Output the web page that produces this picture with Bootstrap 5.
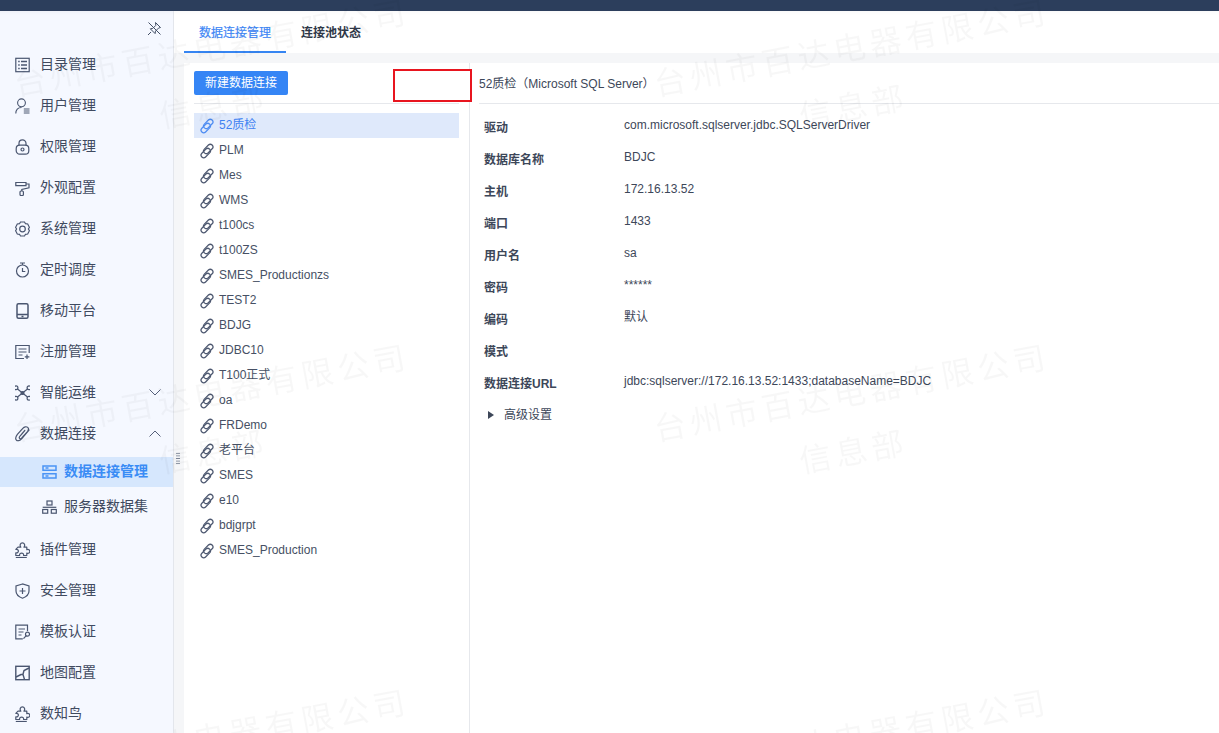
<!DOCTYPE html>
<html lang="zh-CN"><head><meta charset="utf-8"><title>数据连接管理</title>
<link href="https://cdn.jsdelivr.net/npm/bootstrap@5.3.0/dist/css/bootstrap.min.css" rel="stylesheet">
<style>
html,body{height:733px;overflow:hidden;margin:0}
body{font-family:"Liberation Sans","Noto Sans CJK SC",sans-serif;font-size:12px;color:#3d4759;background:#fff}
.top-strip{height:11px;background:#2c3e5c}
.app-body{height:722px}
.side-nav{width:174px;flex:none;background:#f5f8ff;border-right:1px solid #e3e6ec;padding-top:33px;position:relative;box-shadow:inset 0 5px 5px -5px rgba(0,0,0,.06)}
.pin-btn{position:absolute;top:10px;right:11px;color:#445066}
.nv-item{height:41px;padding-left:15px;font-size:14px;color:#3f4a60;gap:10px}
.nv-item svg.ic{width:15px;height:16px;flex:none;color:#4a5670;overflow:visible}
.nv-item .chev{margin-left:auto;margin-right:12px;color:#55607a}
.nv-sub{padding:2.5px 0 7.5px;display:flex;flex-direction:column;gap:5px}
.nv-subitem{height:30px;padding-left:42px;font-size:14px;color:#3f4a60;gap:7px}
.nv-subitem svg{width:15px;height:14px;flex:none;color:#4a5670}
.nv-subitem.on{background:#d6e7fd;color:#3a8cf5;font-weight:700}
.nv-subitem.on svg{color:#4a94f5}
.grip{position:absolute;right:-7px;top:441px;width:4px;height:13px;background-image:radial-gradient(#7c8698 .7px,transparent .8px);background-size:2px 2.6px}
.main-col{background:#f5f6f8;min-width:0}
.tab-bar{height:42px;background:#fff;box-shadow:inset 0 5px 5px -5px rgba(0,0,0,.05);padding-left:10px}
.tab-it{height:42px;padding:0 15px;width:102px;font-size:12px;font-weight:700;color:#2f3848;line-height:45px;white-space:nowrap}
.tab-it.on{color:#3d86f5;border-bottom:2px solid #3685f2;font-weight:400;-webkit-text-stroke:.2px #3d86f5}
.tab-it+.tab-it{width:auto}
.work{margin:10px 0 0 10px;background:#fff;height:670px}
.conn-pane{width:286px;flex:none;border-right:1px solid #e6e8ec;position:relative}
.conn-tool{margin:0 10px;padding-top:8px;border-bottom:1px solid #e6e8ec;box-sizing:content-box;height:32px}
.btn-new{background:#3585f5;color:#fff;border:0;border-radius:2px;width:94px;height:24px;font-size:12px;padding:0;display:block}
.conn-list{margin:9px 10px 0}
.conn-row{height:25px;padding:0 0 2px 5px;gap:4px;color:#465064;font-size:12px}
.conn-row svg{width:16px;height:16px;flex:none;color:#4d5870;margin-top:2px}
.conn-row.on{background:#dfe9fb;color:#3f82f2}
.conn-row.on svg{color:#4d8cf2}
.red-box{position:absolute;left:209px;top:6px;width:79px;height:33px;border:2px solid #e8151f;background:#fff}
.detail-pane{min-width:0;padding-left:9px}
.detail-head{height:41px;line-height:42px;border-bottom:1px solid #e6e8ec;font-size:12px;color:#3d4759;margin-bottom:8px}
.field-row{height:32px;padding-left:5px;margin:0}
.field-k{width:140px;flex:none;font-weight:700;color:#3d4759;line-height:16px;padding-top:8px}
.field-v{line-height:16px;padding-top:5px;color:#3d4759}
.adv-row{padding:6px 0 0 9px;gap:10px;color:#3d4759}
.adv-tri{width:0;height:0;border-left:6px solid #3d4759;border-top:4px solid transparent;border-bottom:4px solid transparent}
.wm-layer{position:fixed;left:-103px;top:-96px;display:grid;grid-template-columns:640px 640px;grid-auto-rows:345px;pointer-events:none;z-index:10}
.wm-cell{display:flex;flex-direction:column;align-items:center;justify-content:center;transform:rotate(-10.5deg);color:rgba(0,0,0,.03);font-size:32px;line-height:58px;letter-spacing:4.5px;white-space:nowrap}
.wm-sub{margin-right:18px}
</style></head><body>
<svg width="0" height="0" class="d-none"><defs>
<symbol id="i-cat" viewBox="0 0 15 16"><g fill="none" stroke="currentColor" stroke-width="1.200"><rect x=".8" y="1.300" width="13.400" height="13.400"/><path d="M3.200 4.500h1.500M3.200 8h1.500M3.200 11.500h1.500M6 4.500h6M6 8h6M6 11.500h6" stroke-width="1.500"/></g></symbol>
<symbol id="i-user" viewBox="0 0 15 16"><g fill="none" stroke="currentColor" stroke-width="1.100"><circle cx="6.500" cy="4.800" r="3.900"/><path d="M.8 15.500c0-3.700 2-6 5.700-6"/><path d="M8.800 11h5.700M8.800 13h5.700M8.800 15h5.700"/></g></symbol>
<symbol id="i-lock" viewBox="0 0 15 16"><g fill="none" stroke="currentColor" stroke-width="1.200"><path d="M4 6.500V4.300a3.500 3.500 0 0 1 7 0v2.200"/><rect x="1.200" y="6.200" width="12.600" height="9" rx="3.500"/><circle cx="7.500" cy="10.500" r="1.500"/></g></symbol>
<symbol id="i-roll" viewBox="0 0 15 16"><g fill="none" stroke="currentColor" stroke-width="1.200"><path d="M11 2.500H.8v3.200H11zM11 4h3v3.800L6.800 9.500V11"/><rect x="5" y="11" width="3.400" height="4.500" rx="1"/></g></symbol>
<symbol id="i-gear" viewBox="0 0 15 16"><g fill="none" stroke="currentColor" stroke-width="1.200"><path d="M5.500 1h4l1 1.700 2.200.3 1.700 3.300-1 1.700 1 1.700-1.700 3.300-2.200.3-1 1.700h-4l-1-1.700-2.200-.3L.6 9.700l1-1.700-1-1.700L2.300 3l2.200-.3z"/><circle cx="7.500" cy="8" r="2.800"/></g></symbol>
<symbol id="i-time" viewBox="0 0 15 16"><g fill="none" stroke="currentColor" stroke-width="1.200"><circle cx="7.500" cy="9" r="6"/><path d="M5 1h5M7.500 1v2M7.500 6v3.500h2.800"/></g></symbol>
<symbol id="i-phone" viewBox="0 0 15 16"><g fill="none" stroke="currentColor" stroke-width="1.500"><rect x="2" y=".8" width="11" height="14.400" rx="1.500"/><path d="M2 11.500h11M6.500 13.400h2"/></g></symbol>
<symbol id="i-reg" viewBox="0 0 15 16"><g fill="none" stroke="currentColor" stroke-width="1.200"><path d="M9 14.500H.8V1.500h13.400V9"/><path d="M3.500 5h8M3.500 8h8M3.500 11h4M12 10.500v4.500M9.800 12.800h4.600"/></g></symbol>
<symbol id="i-net" viewBox="0 0 15 16"><g fill="none" stroke="currentColor" stroke-width="1.200"><circle cx="1" cy="2.800" r="1.900"/><circle cx="14" cy="2.800" r="1.900"/><circle cx="1" cy="13.200" r="1.900"/><circle cx="14" cy="13.200" r="1.900"/><path d="M2.500 4l10 8M12.500 4l-10 8"/><circle cx="7.500" cy="8" r="1.500" fill="currentColor"/></g></symbol>
<symbol id="i-clip" viewBox="0 0 15 16"><path fill="none" stroke="currentColor" stroke-width="1.200" stroke-linecap="round" d="M14 4 6.800 12.600c-1.900 2.300-4.400 2.700-5.400 1.500-1.100-1.200-.7-3.500 1-5.700L7.800 2.300c1.500-1.700 3.700-2 4.900-.9 1.100 1 .9 2.700-.3 4.200L6.800 12c-.8.800-1.700.9-2.200.4s-.3-1.500.4-2.300l4.800-5.600"/></symbol>
<symbol id="i-srv" viewBox="0 0 15 14"><g fill="none" stroke="currentColor" stroke-width="1.500"><path d="M1 1h13v4.200H1zM1 8.800h13V13H1z"/><path d="M3.500 3.100h3M3.500 10.900h3"/></g></symbol>
<symbol id="i-tree" viewBox="0 0 15 14"><g fill="none" stroke="currentColor" stroke-width="1.200"><rect x="5" y="1" width="5" height="4"/><rect x=".7" y="9.500" width="5" height="3.700"/><rect x="9.300" y="9.500" width="5" height="3.700"/><path d="M.7 7.300h13.600"/></g></symbol>
<symbol id="i-puz" viewBox="0 0 15 16"><g fill="none" stroke="currentColor" stroke-width="1.200"><path d="M3 5.200h2.800C4.400 3.200 5.400.8 7.400.8s3 2.400 1.600 4.400h2.800v2.500c1.700-.8 3 .3 3 1.700s-1.300 2.500-3 1.700v2.400H8.600c.2-1.700-.8-2.400-2-2.400s-2.200.7-2 2.400H.8V10.800c1.700.4 2.600-.6 2.600-1.700S2.500 7 .8 7.400z" stroke-linejoin="round"/><path d="M.8 15.500h11"/></g></symbol>
<symbol id="i-shield" viewBox="0 0 15 16"><g fill="none" stroke="currentColor" stroke-width="1.200"><path d="M7.500 1 1 3v5c0 3.500 3.200 6 6.500 7.200C10.800 14 14 11.500 14 8V3z"/><path d="M7.500 5v6M4.500 8h6"/></g></symbol>
<symbol id="i-doc" viewBox="0 0 15 16"><g fill="none" stroke="currentColor" stroke-width="1.200"><path d="M12.500 7V1.200H.8v13.600h7"/><path d="M3.500 5h6.500M3.500 8h5M3.500 11h3"/><circle cx="12.500" cy="10.200" r="2"/><path d="M11 11.800l-2.500 2.800"/></g></symbol>
<symbol id="i-map" viewBox="0 0 15 16"><g fill="none" stroke="currentColor" stroke-width="1.400"><rect x=".8" y="1.300" width="13.400" height="13.400"/><path d="M1 12l5-2.500 2-.2 1-3.800 5-2.500M8 9.500l1.500 5"/></g></symbol>
<symbol id="i-link" viewBox="0 0 14 14"><g fill="none" stroke="currentColor" stroke-width="1.100"><rect x="5.800" y=".4" width="4.600" height="9.600" rx="2.300" transform="rotate(45 8.100 5.200)"/><rect x="3.600" y="4" width="4.600" height="9.600" rx="2.300" transform="rotate(45 5.900 8.800)"/></g></symbol>
</defs></svg>
<div class="top-strip"></div>
<div class="app-body d-flex">
<nav class="side-nav">
<svg class="pin-btn" width="15" height="15" viewBox="0 0 15 15"><g fill="none" stroke="currentColor"><path d="M8.500 1.500l5 5-2 .6-3 3-.4 2.500-4.800-4.800 2.500-.4 3-3z"/><path d="M4 11 1 14M1.500 1.500l12 12"/></g></svg>
<div class="nv-item d-flex align-items-center"><svg class="ic"><use href="#i-cat"/></svg>目录管理</div>
<div class="nv-item d-flex align-items-center"><svg class="ic"><use href="#i-user"/></svg>用户管理</div>
<div class="nv-item d-flex align-items-center"><svg class="ic"><use href="#i-lock"/></svg>权限管理</div>
<div class="nv-item d-flex align-items-center"><svg class="ic"><use href="#i-roll"/></svg>外观配置</div>
<div class="nv-item d-flex align-items-center"><svg class="ic"><use href="#i-gear"/></svg>系统管理</div>
<div class="nv-item d-flex align-items-center"><svg class="ic"><use href="#i-time"/></svg>定时调度</div>
<div class="nv-item d-flex align-items-center"><svg class="ic"><use href="#i-phone"/></svg>移动平台</div>
<div class="nv-item d-flex align-items-center"><svg class="ic"><use href="#i-reg"/></svg>注册管理</div>
<div class="nv-item d-flex align-items-center"><svg class="ic"><use href="#i-net"/></svg>智能运维<svg class="chev" width="12" height="7" viewBox="0 0 12 7"><path d="M.5.5 6 6l5.500-5.500" fill="none" stroke="currentColor"/></svg></div>
<div class="nv-item d-flex align-items-center"><svg class="ic"><use href="#i-clip"/></svg>数据连接<svg class="chev" width="12" height="7" viewBox="0 0 12 7"><path d="M.5 6.500 6 1l5.500 5.500" fill="none" stroke="currentColor"/></svg></div>
<div class="nv-sub">
<div class="nv-subitem on d-flex align-items-center"><svg><use href="#i-srv"/></svg>数据连接管理</div>
<div class="nv-subitem d-flex align-items-center"><svg><use href="#i-tree"/></svg>服务器数据集</div>
</div>
<div class="nv-item d-flex align-items-center"><svg class="ic"><use href="#i-puz"/></svg>插件管理</div>
<div class="nv-item d-flex align-items-center"><svg class="ic"><use href="#i-shield"/></svg>安全管理</div>
<div class="nv-item d-flex align-items-center"><svg class="ic"><use href="#i-doc"/></svg>模板认证</div>
<div class="nv-item d-flex align-items-center"><svg class="ic"><use href="#i-map"/></svg>地图配置</div>
<div class="nv-item d-flex align-items-center"><svg class="ic"><use href="#i-puz"/></svg>数知鸟</div>
<div class="grip"></div>
</nav>
<main class="main-col flex-grow-1">
<div class="tab-bar d-flex">
<div class="tab-it on">数据连接管理</div>
<div class="tab-it">连接池状态</div>
</div>
<div class="work d-flex">
<section class="conn-pane">
<div class="conn-tool"><button class="btn-new" type="button">新建数据连接</button></div>
<div class="red-box"></div>
<div class="conn-list">
<div class="conn-row on d-flex align-items-center"><svg><use href="#i-link"/></svg>52质检</div>
<div class="conn-row d-flex align-items-center"><svg><use href="#i-link"/></svg>PLM</div>
<div class="conn-row d-flex align-items-center"><svg><use href="#i-link"/></svg>Mes</div>
<div class="conn-row d-flex align-items-center"><svg><use href="#i-link"/></svg>WMS</div>
<div class="conn-row d-flex align-items-center"><svg><use href="#i-link"/></svg>t100cs</div>
<div class="conn-row d-flex align-items-center"><svg><use href="#i-link"/></svg>t100ZS</div>
<div class="conn-row d-flex align-items-center"><svg><use href="#i-link"/></svg>SMES_Productionzs</div>
<div class="conn-row d-flex align-items-center"><svg><use href="#i-link"/></svg>TEST2</div>
<div class="conn-row d-flex align-items-center"><svg><use href="#i-link"/></svg>BDJG</div>
<div class="conn-row d-flex align-items-center"><svg><use href="#i-link"/></svg>JDBC10</div>
<div class="conn-row d-flex align-items-center"><svg><use href="#i-link"/></svg>T100正式</div>
<div class="conn-row d-flex align-items-center"><svg><use href="#i-link"/></svg>oa</div>
<div class="conn-row d-flex align-items-center"><svg><use href="#i-link"/></svg>FRDemo</div>
<div class="conn-row d-flex align-items-center"><svg><use href="#i-link"/></svg>老平台</div>
<div class="conn-row d-flex align-items-center"><svg><use href="#i-link"/></svg>SMES</div>
<div class="conn-row d-flex align-items-center"><svg><use href="#i-link"/></svg>e10</div>
<div class="conn-row d-flex align-items-center"><svg><use href="#i-link"/></svg>bdjgrpt</div>
<div class="conn-row d-flex align-items-center"><svg><use href="#i-link"/></svg>SMES_Production</div>
</div>
</section>
<section class="detail-pane flex-grow-1">
<div class="detail-head">52质检（Microsoft SQL Server）</div>
<div class="field-row d-flex"><div class="field-k">驱动</div><div class="field-v">com.microsoft.sqlserver.jdbc.SQLServerDriver</div></div>
<div class="field-row d-flex"><div class="field-k">数据库名称</div><div class="field-v">BDJC</div></div>
<div class="field-row d-flex"><div class="field-k">主机</div><div class="field-v">172.16.13.52</div></div>
<div class="field-row d-flex"><div class="field-k">端口</div><div class="field-v">1433</div></div>
<div class="field-row d-flex"><div class="field-k">用户名</div><div class="field-v">sa</div></div>
<div class="field-row d-flex"><div class="field-k">密码</div><div class="field-v">******</div></div>
<div class="field-row d-flex"><div class="field-k">编码</div><div class="field-v">默认</div></div>
<div class="field-row d-flex"><div class="field-k">模式</div><div class="field-v"></div></div>
<div class="field-row d-flex"><div class="field-k">数据连接URL</div><div class="field-v">jdbc:sqlserver://172.16.13.52:1433;databaseName=BDJC</div></div>
<div class="adv-row d-flex align-items-center"><span class="adv-tri"></span>高级设置</div>
</section>
</div>
</main>
</div>
<div class="wm-layer" aria-hidden="true">
<div class="wm-cell"><span>台州市百达电器有限公司</span><span class="wm-sub">信息部</span></div>
<div class="wm-cell"><span>台州市百达电器有限公司</span><span class="wm-sub">信息部</span></div>
<div class="wm-cell"><span>台州市百达电器有限公司</span><span class="wm-sub">信息部</span></div>
<div class="wm-cell"><span>台州市百达电器有限公司</span><span class="wm-sub">信息部</span></div>
<div class="wm-cell"><span>台州市百达电器有限公司</span><span class="wm-sub">信息部</span></div>
<div class="wm-cell"><span>台州市百达电器有限公司</span><span class="wm-sub">信息部</span></div>
</div>
<script src="https://cdn.jsdelivr.net/npm/bootstrap@5.3.0/dist/js/bootstrap.bundle.min.js"></script>
</body></html>
